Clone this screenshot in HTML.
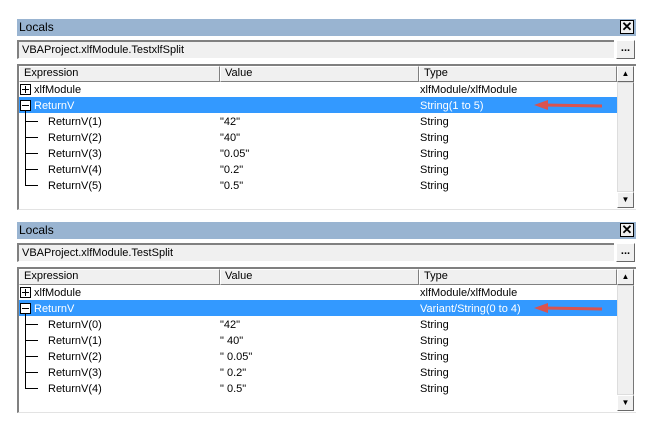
<!DOCTYPE html><html><head><style>
body{margin:0;width:649px;height:431px;background:#fff;position:relative;font-family:"Liberation Sans",sans-serif;font-size:11px;color:#000;overflow:hidden}
.a{position:absolute}
.title{left:17px;width:619px;height:17px;background:#99b4d1;font-size:12px;line-height:17px;padding-left:2px;box-sizing:border-box}
.x{width:14px;height:14px;background:#f0f0f0;border:1px solid #000;box-sizing:border-box;font-weight:bold;font-size:13px;line-height:12px;text-align:center}
.combo{left:17px;width:597px;height:19px;background:#f0f0f0;border-top:2px solid #808080;border-left:2px solid #808080;border-bottom:1px solid #fff;box-sizing:border-box;line-height:16px;padding-left:3px}
.dots{width:19px;height:19px;background:#f0f0f0;border-right:1px solid #696969;border-bottom:1px solid #696969;border-top:1px solid #fff;border-left:1px solid #fff;box-sizing:border-box;font-weight:bold;text-align:center;line-height:14px}
.list{left:17px;width:619px;height:146px;border-top:2px solid #808080;border-left:2px solid #808080;border-bottom:1px solid #e3e3e3;box-sizing:border-box;background:#fff}
.hdr{height:16px;background:#f0f0f0;border-right:1px solid #808080;border-bottom:1px solid #808080;border-top:1px solid #fff;border-left:1px solid #fff;box-sizing:border-box;line-height:13px;padding-left:4px}
.row{height:16px;line-height:16px;white-space:nowrap}
.sel{background:#3399ff;color:#fff}
.sb{width:17px;background:#f0f0f0}
.box{width:11px;height:11px;border:1px solid #000;box-sizing:border-box;background:#fff}
</style></head><body>
<div id="p1"></div>
<script>
function panel(o,path,t1,vals,idx){
let h='';
h+=`<div class="a title" style="top:${o+19}px">Locals</div>`;
h+=`<div class="a x" style="left:620px;top:${o+20}px">✕</div>`;
h+=`<div class="a combo" style="top:${o+40}px">${path}</div>`;
h+=`<div class="a dots" style="left:616px;top:${o+40}px">...</div>`;
h+=`<div class="a list" style="top:${o+64}px"></div>`;
h+=`<div class="a hdr" style="left:19px;top:${o+66}px;width:201px">Expression</div>`;
h+=`<div class="a hdr" style="left:220px;top:${o+66}px;width:199px">Value</div>`;
h+=`<div class="a hdr" style="left:419px;top:${o+66}px;width:198px">Type</div>`;
h+=`<div class="a sb" style="left:617px;top:${o+66}px;height:142px"></div>`;
h+=`<div class="a dots" style="left:617px;top:${o+66}px;width:17px;height:16px;font-size:8px;line-height:14px">▲</div>`;
h+=`<div class="a" style="left:617px;top:${o+82}px;width:17px;height:110px;border:1px solid #ddd;box-sizing:border-box;border-right-color:#777"></div>`;
h+=`<div class="a dots" style="left:617px;top:${o+192}px;width:17px;height:16px;font-size:8px;line-height:14px">▼</div>`;
h+=`<div class="a row" style="left:19px;top:${o+82}px;width:598px"><span class="a" style="left:15px">xlfModule</span><span class="a" style="left:401px">xlfModule/xlfModule</span></div>`;
h+=`<div class="a box" style="left:20px;top:${o+84}px"><div class="a" style="left:1px;top:4px;width:7px;height:1px;background:#000"></div><div class="a" style="left:4px;top:1px;width:1px;height:7px;background:#000"></div></div>`;
h+=`<div class="a row sel" style="left:19px;top:${o+97}px;width:598px;line-height:18px"><span class="a" style="left:15px">ReturnV</span><span class="a" style="left:401px">${t1}</span></div>`;
h+=`<div class="a box" style="left:20px;top:${o+100}px"><div class="a" style="left:1px;top:4px;width:7px;height:1px;background:#000"></div></div>`;
h+=`<div class="a" style="left:25px;top:${o+111}px;width:1px;height:75px;background:#000"></div>`;
for(let i=0;i<5;i++){let y=o+114+16*i;
h+=`<div class="a" style="left:25px;top:${y+7}px;width:13px;height:1px;background:#000"></div>`;
h+=`<div class="a row" style="left:48px;top:${y}px">ReturnV(${i+idx})</div>`;
h+=`<div class="a row" style="left:220px;top:${y}px">${vals[i]}</div>`;
h+=`<div class="a row" style="left:420px;top:${y}px">String</div>`;}
h+=`<svg class="a" style="left:530px;top:${o+97}px" width="75" height="16"><line x1="14" y1="8" x2="72" y2="9" stroke="#d9534f" stroke-width="3"/><polygon points="4,8 18,3 18,13" fill="#d9534f"/></svg>`;
return h;}
document.getElementById('p1').innerHTML=panel(0,'VBAProject.xlfModule.TestxlfSplit','String(1 to 5)',['"42"','"40"','"0.05"','"0.2"','"0.5"'],1)+panel(203,'VBAProject.xlfModule.TestSplit','Variant/String(0 to 4)',['"42"','" 40"','" 0.05"','" 0.2"','" 0.5"'],0);
</script>
</body></html>
